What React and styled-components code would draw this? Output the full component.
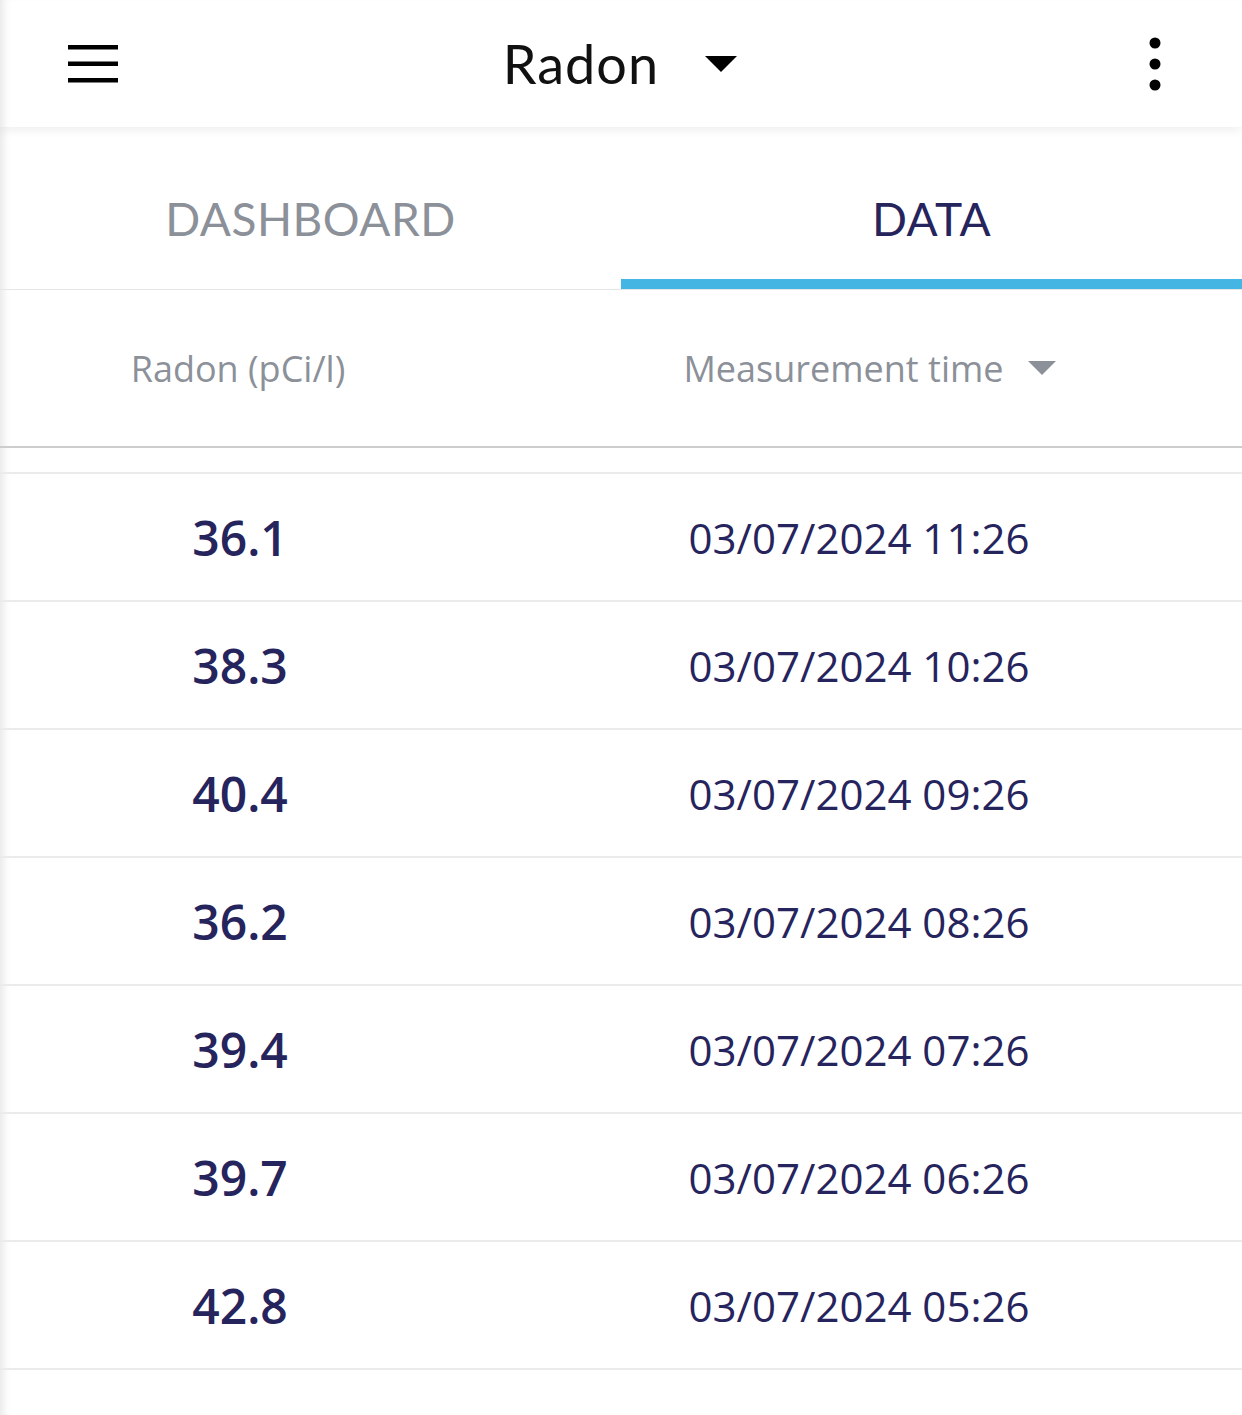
import React from 'react';
import styled, { createGlobalStyle } from 'styled-components';

const GlobalStyle = createGlobalStyle`
    html, body {
        margin: 0;
        padding: 0;
        background: #ffffff;
    }
    body {
        font-family: "Open Sans", "Noto Sans", sans-serif;
    }
`;

const NAVY = '#26245d';
const GREY = '#8b9099';

const Page = styled.div`
    width: 1242px;
    min-height: 1415px;
    background: #ffffff;
    box-shadow: inset 9px 0 8px -6px rgba(0, 0, 0, 0.10);
    overflow: hidden;
`;

const TopBar = styled.header`
    height: 127px;
    display: flex;
    align-items: center;
    justify-content: space-between;
    padding: 0 62px 0 68px;
    box-shadow: 0 3px 10px rgba(0, 0, 0, 0.07);
    position: relative;
`;

const IconButton = styled.div`
    width: 50px;
    height: 50px;
    display: flex;
    align-items: center;
    justify-content: center;
`;

const Title = styled.div`
    display: flex;
    align-items: center;
    gap: 46px;
    padding-right: 8px;
    font-family: "Lato", "Open Sans", sans-serif;
    font-size: 54px;
    color: #111111;
    letter-spacing: 1px;
`;

const Tabs = styled.nav`
    display: flex;
    height: 162px;
    border-bottom: 1px solid #e6e6e6;
`;

const Tab = styled.div`
    flex: 1;
    display: flex;
    align-items: center;
    justify-content: center;
    padding-top: 30px;
    font-family: "Lato", "Open Sans", sans-serif;
    font-size: 46px;
    letter-spacing: 0.5px;
    color: ${p => (p.$active ? NAVY : GREY)};
    border-bottom: 10px solid ${p => (p.$active ? '#45b5e3' : 'transparent')};
`;

const Grid = styled.div`
    display: grid;
    grid-template-columns: 476px 1fr;
`;

const HeadRow = styled(Grid)`
    height: 156px;
    border-bottom: 2px solid #cdcdcd;
    align-items: center;
    font-size: 36px;
    color: ${GREY};
`;

const HeadCell = styled.div`
    display: flex;
    align-items: center;
    justify-content: center;
    gap: 24px;
    padding-left: ${p => p.$shift || 0}px;
`;

const Spacer = styled.div`
    height: 24px;
    border-bottom: 2px solid #ebebeb;
`;

const Row = styled(Grid)`
    height: 126px;
    border-bottom: 2px solid #ebebeb;
    align-items: center;
    color: ${NAVY};
`;

const Value = styled.div`
    text-align: center;
    font-size: 48px;
    font-weight: 600;
    padding-left: 4px;
`;

const Time = styled.div`
    text-align: center;
    font-size: 42px;
`;

const Hamburger = () => (
    <svg width="50" height="38" viewBox="0 0 50 38">
        <rect x="0" y="0" width="50" height="4.5" fill="#000" />
        <rect x="0" y="16.5" width="50" height="4.5" fill="#000" />
        <rect x="0" y="33" width="50" height="4.5" fill="#000" />
    </svg>
);

const Kebab = () => (
    <svg width="12" height="54" viewBox="0 0 12 54">
        <circle cx="6" cy="6" r="5.5" fill="#000" />
        <circle cx="6" cy="27" r="5.5" fill="#000" />
        <circle cx="6" cy="48" r="5.5" fill="#000" />
    </svg>
);

const Caret = ({ color, width, height }) => (
    <svg width={width} height={height} viewBox="0 0 10 5">
        <path d="M0 0 L10 0 L5 5 Z" fill={color} />
    </svg>
);

const rows = [
    ['36.1', '03/07/2024 11:26'],
    ['38.3', '03/07/2024 10:26'],
    ['40.4', '03/07/2024 09:26'],
    ['36.2', '03/07/2024 08:26'],
    ['39.4', '03/07/2024 07:26'],
    ['39.7', '03/07/2024 06:26'],
    ['42.8', '03/07/2024 05:26'],
];

export default function App() {
    return (
        <Page>
            <GlobalStyle />
            <TopBar>
                <IconButton><Hamburger /></IconButton>
                <Title>
                    <span>Radon</span>
                    <Caret color="#000" width={32} height={16} />
                </Title>
                <IconButton><Kebab /></IconButton>
            </TopBar>
            <Tabs>
                <Tab>DASHBOARD</Tab>
                <Tab $active>DATA</Tab>
            </Tabs>
            <HeadRow>
                <HeadCell>Radon (pCi/l)</HeadCell>
                <HeadCell $shift={21}>
                    <span>Measurement time</span>
                    <Caret color={GREY} width={28} height={14} />
                </HeadCell>
            </HeadRow>
            <Spacer />
            {rows.map(([value, time]) => (
                <Row key={time}>
                    <Value>{value}</Value>
                    <Time>{time}</Time>
                </Row>
            ))}
        </Page>
    );
}
